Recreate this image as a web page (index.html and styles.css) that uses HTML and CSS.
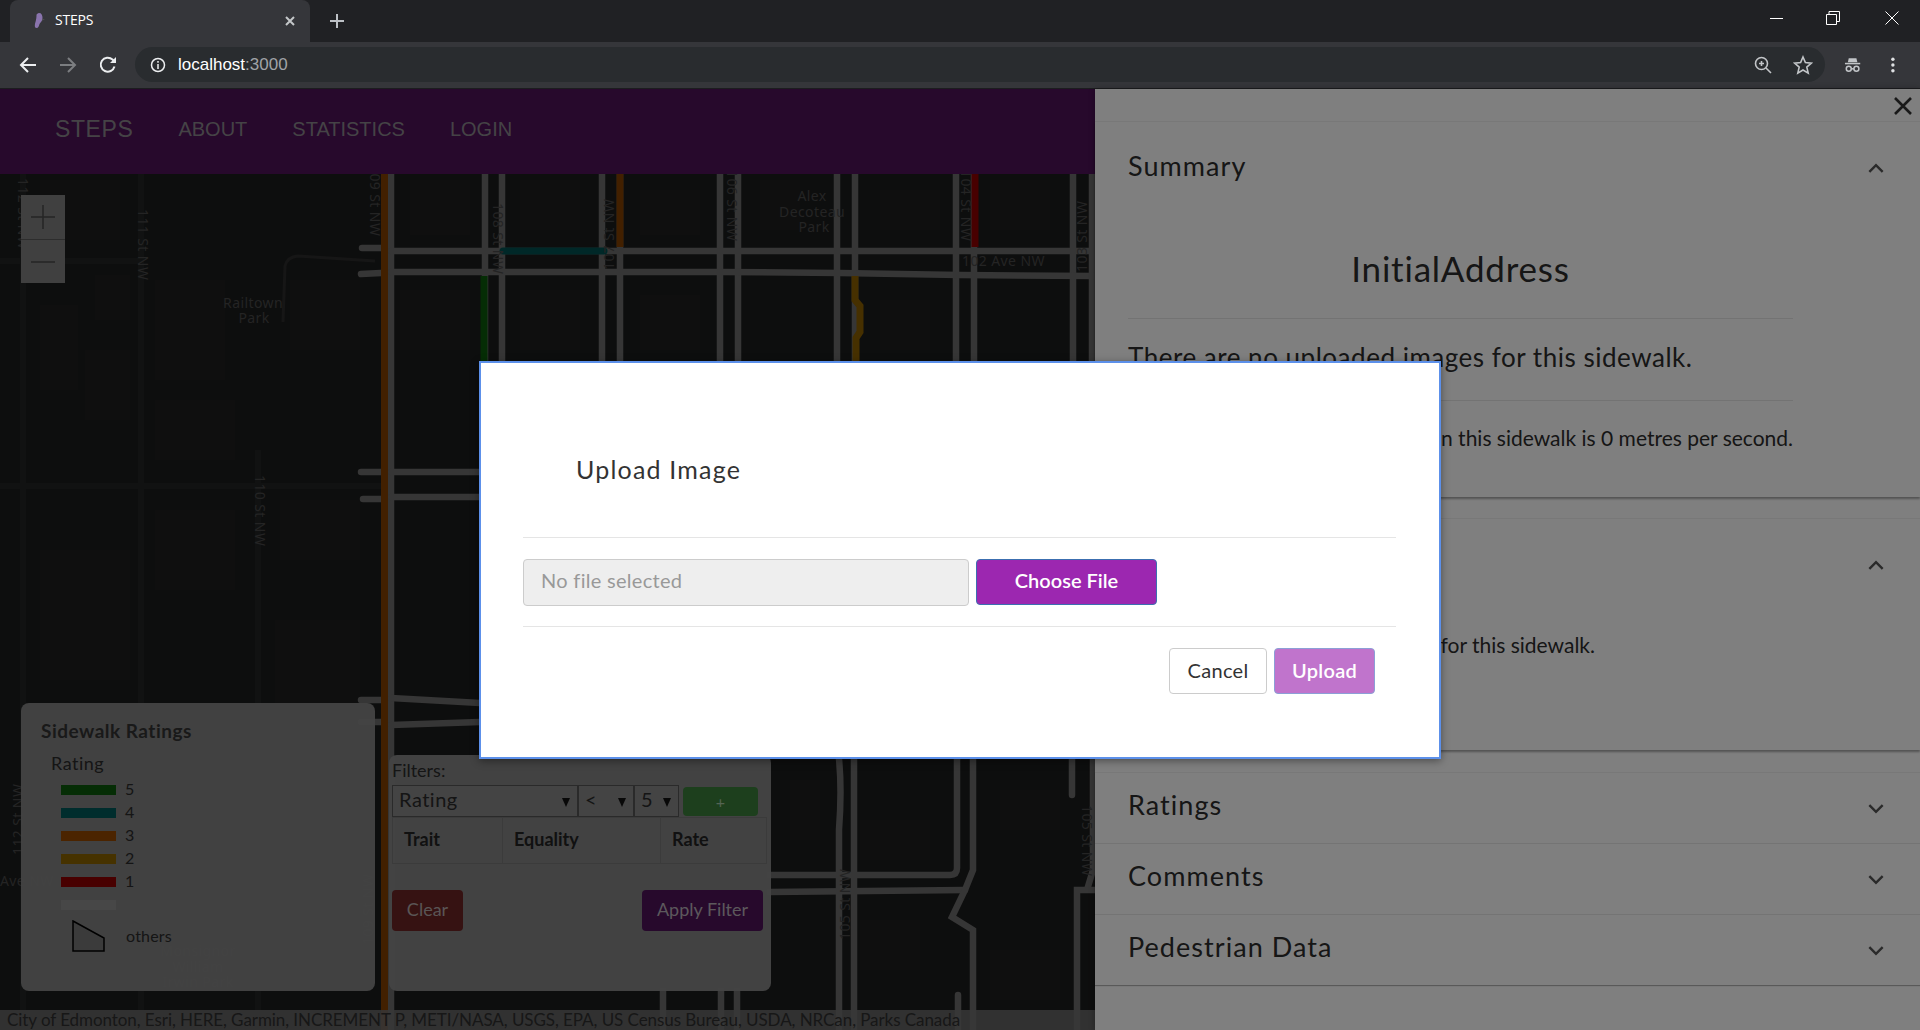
FILE: index.html
```html
<!DOCTYPE html>
<html lang="en">
<head>
<meta charset="utf-8">
<title>STEPS</title>
<link rel="stylesheet" href="styles.css">
</head>
<body>
<div class="tabstrip">
  <div class="tab">
    <svg class="favicon" width="12" height="16" viewBox="0 0 12 16"><path class="favicon-foot" d="M6 0c2.500 0 3.500 2 3.500 5 0 3-2 4-3 6-.6 2-1 4-3 4C1.500 15 1.500 12 2.500 9c.8-3 1-5 1-7 0-1 1.500-2 2.500-2z"/><path class="favicon-toe" d="M9 6l3 .5-3 1z"/></svg>
    <span class="tab-title">STEPS</span>
    <svg class="tab-close" width="10" height="10" viewBox="0 0 10 10"><path d="M1 1l8 8M9 1l-8 8"/></svg>
  </div>
  <svg class="newtab" width="16" height="16" viewBox="0 0 16 16"><path d="M8 1v14M1 8h14"/></svg>
  <div class="window-controls">
    <svg width="14" height="14" viewBox="0 0 14 14"><path d="M0 7.500h13"/></svg>
    <svg width="14" height="14" viewBox="0 0 14 14"><path d="M.5 3.500h10v10H.5zM3 3.500V.5h10.500v10h-3"/></svg>
    <svg width="14" height="14" viewBox="0 0 14 14"><path d="M.5.5l13 13M13.500.5l-13 13"/></svg>
  </div>
</div>
<div class="toolbar">
  <svg class="nav-icon" width="18" height="18" viewBox="0 0 18 18"><path class="ink-light" d="M17 9H2M9 2L2 9l7 7"/></svg>
  <svg class="nav-icon" width="18" height="18" viewBox="0 0 18 18"><path class="ink-dim" d="M1 9h15M9 2l7 7-7 7"/></svg>
  <svg class="nav-icon" width="18" height="18" viewBox="0 0 18 18"><path class="ink-light" d="M15.500 10.500A7 7 0 1 1 13.500 3.500L16 6"/><path class="ink-fill" d="M17 1v6h-6z"/></svg>
  <div class="omnibox">
    <svg class="info" width="16" height="16" viewBox="0 0 16 16"><circle class="ink-light" cx="8" cy="8" r="6.500"/><path class="ink-light" d="M8 7v5M8 4v1.800"/></svg>
    <span class="host">localhost</span><span class="port">:3000</span>
    <span class="omni-spacer"></span>
    <svg class="omni-icon omni-zoom" width="18" height="18" viewBox="0 0 18 18"><circle class="ink-grey" cx="7.500" cy="7.500" r="6"/><path class="ink-grey" d="M12 12l5 5M7.500 5v5M5 7.500h5"/></svg>
    <svg class="omni-icon" width="20" height="20" viewBox="0 0 20 20"><path class="ink-grey" d="M10 2l2.400 5.600 6 .5-4.600 4 1.400 6L10 15l-5.200 3.100 1.400-6-4.600-4 6-.5z"/></svg>
  </div>
  <svg class="incognito" width="18" height="16" viewBox="0 0 18 16"><path class="ink-fill-grey" d="M5 1h8l1 4H4z"/><path class="ink-grey" d="M1 6.500h16"/><circle class="ink-grey" cx="5" cy="12" r="2.600"/><circle class="ink-grey" cx="13" cy="12" r="2.600"/><path class="ink-grey" d="M7.600 12h2.800"/></svg>
  <svg class="dots" width="4" height="16" viewBox="0 0 4 16"><circle cx="2" cy="2" r="1.800"/><circle cx="2" cy="8" r="1.800"/><circle cx="2" cy="14" r="1.800"/></svg>
</div>

<div class="page">
  <main class="main">
    <nav class="navbar">
      <a class="brand">STEPS</a>
      <a class="nav-link">ABOUT</a>
      <a class="nav-link">STATISTICS</a>
      <a class="nav-link">LOGIN</a>
    </nav>
    <div class="map">
      <svg class="map-canvas" viewBox="0 174 1095 856" width="1095" height="856">
        <g class="blocks">
          <rect x="40" y="180" width="80" height="60"/><rect x="95" y="275" width="35" height="45"/><rect x="155" y="280" width="70" height="100"/><rect x="40" y="305" width="38" height="85"/><rect x="85" y="350" width="45" height="70"/><rect x="155" y="400" width="80" height="60"/><rect x="290" y="280" width="70" height="70"/><rect x="155" y="510" width="80" height="80"/><rect x="40" y="550" width="90" height="130"/><rect x="280" y="500" width="80" height="60"/><rect x="275" y="620" width="85" height="90"/><rect x="400" y="290" width="70" height="60"/><rect x="410" y="180" width="60" height="55"/><rect x="520" y="180" width="60" height="50"/><rect x="640" y="190" width="60" height="45"/><rect x="760" y="180" width="40" height="50"/><rect x="880" y="190" width="60" height="40"/><rect x="990" y="180" width="60" height="50"/><rect x="520" y="290" width="60" height="60"/><rect x="640" y="295" width="60" height="55"/><rect x="880" y="300" width="50" height="50"/><rect x="860" y="820" width="70" height="40"/><rect x="860" y="920" width="60" height="50"/><rect x="1000" y="790" width="60" height="40"/><rect x="990" y="950" width="70" height="50"/><rect x="790" y="780" width="30" height="60"/>
        </g>
        <g class="minor">
          <path d="M23 174V1010M141 174V1010M258 450V1010M0 486H381M0 261H141"/>
        </g>
        <path class="path-faint" d="M283 322L285 266Q287 257 298 256L375 261"/>
        <g class="walks">
          <path d="M391 174V1030M485 174V361M502 174V361M602 174V361M620 174V361M720 174V361M738 174V361M837 174V361M855 174V361M956 174V361M974 174V361M1073 174V361M1092 174V361"/>
          <path d="M391 251H1095M391 272L720 272L840 273L960 275L1095 276"/>
          <path d="M362 248H381M361 274L381 273M361 472H381M363 499H381M361 700H381M361 722H381"/>
          <path d="M391 472H480M391 497H480M391 698L480 703M391 725L480 722"/>
          <path d="M770 875H950Q957 875 957 868V759M770 892L965 890"/>
          <path d="M973 759V870L965 890L952 917L973 930V1030M839 759Q842 790 839 830V1030M854 759V1030M1072 759V795M1093 759V870L1087 890H1077V1030M1077 890H1095M958 995V1030M663 991V1030M721 991V1030M737 991V1030"/>
        </g>
        <path class="seg seg-3" d="M384.500 174V1030"/>
        <path class="seg seg-3" d="M620 174V247"/>
        <path class="seg seg-1" d="M975 174V247"/>
        <path class="seg seg-5" d="M484 276V361"/>
        <path class="seg seg-2" d="M855 276V300L860 306V332L856 338V361"/>
        <path class="seg seg-4 round" d="M503 251H604"/>
        <g class="map-label">
          <text transform="translate(18 178) rotate(90)">112 St NW</text>
          <text transform="translate(138 209) rotate(90)">111 St NW</text>
          <text transform="translate(255 475) rotate(90)">110 St NW</text>
          <text transform="translate(370 165) rotate(90)">109 St NW</text>
          <text transform="translate(493 203) rotate(90)">108 St NW</text>
          <text transform="translate(614 270) rotate(-90)">107 St NW</text>
          <text transform="translate(727 170) rotate(90)">106 St NW</text>
          <text transform="translate(961 170) rotate(90)">104 St NW</text>
          <text transform="translate(1087 272) rotate(-90)">103 St NW</text>
          <text transform="translate(850 940) rotate(-90)">105 St NW</text>
          <text transform="translate(1082 805) rotate(90)">105 St NW</text>
          <text transform="translate(23 855) rotate(-90)">112 St NW</text>
          <text transform="translate(373 945) rotate(-90)">109 St NW</text>
          <text x="962" y="266">102 Ave NW</text>
          <text x="0" y="886">Ave NW</text>
          <text class="center" x="253" y="308">Railtown</text>
          <text class="center" x="254" y="323">Park</text>
          <text class="center" x="812" y="201">Alex</text>
          <text class="center" x="812" y="217">Decoteau</text>
          <text class="center" x="814" y="232">Park</text>
          <text class="center" x="198" y="956">Monsignor</text>
          <text class="center" x="198" y="972">William</text>
          <text class="center" x="198" y="987">Irwin Park</text>
        </g>
      </svg>
      <div class="zoom-control">
        <div class="zoom-button"><svg width="26" height="26" viewBox="0 0 26 26"><path d="M13 1v24M1 13h24"/></svg></div>
        <div class="zoom-button"><svg width="26" height="26" viewBox="0 0 26 26"><path d="M1 13h24"/></svg></div>
      </div>
      <aside class="legend">
        <h3 class="legend-title">Sidewalk Ratings</h3>
        <div class="legend-sub">Rating</div>
        <ul class="legend-list">
          <li class="legend-row"><span class="swatch swatch-5"></span><span class="legend-num">5</span></li>
          <li class="legend-row"><span class="swatch swatch-4"></span><span class="legend-num">4</span></li>
          <li class="legend-row"><span class="swatch swatch-3"></span><span class="legend-num">3</span></li>
          <li class="legend-row"><span class="swatch swatch-2"></span><span class="legend-num">2</span></li>
          <li class="legend-row"><span class="swatch swatch-1"></span><span class="legend-num">1</span></li>
          <li class="legend-row"><span class="swatch swatch-0"></span></li>
        </ul>
        <div class="legend-others">
          <svg width="33" height="32" viewBox="0 0 33 32"><path d="M1 1L32 18V31H1z"/></svg>
          <span class="legend-others-label">others</span>
        </div>
      </aside>
      <aside class="filters">
        <div class="filters-title">Filters:</div>
        <div class="filter-row">
          <div class="select select-trait">Rating</div>
          <div class="select select-op">&lt;</div>
          <div class="select select-val">5</div>
          <button class="btn-add">+</button>
        </div>
        <table class="filter-table">
          <thead><tr><th class="col-trait">Trait</th><th class="col-eq">Equality</th><th class="col-rate">Rate</th></tr></thead>
        </table>
        <div class="filter-actions">
          <button class="btn-filter btn-clear">Clear</button>
          <button class="btn-filter btn-apply">Apply Filter</button>
        </div>
      </aside>
      <div class="attribution">City of Edmonton, Esri, HERE, Garmin, INCREMENT P, METI/NASA, USGS, EPA, US Census Bureau, USDA, NRCan, Parks Canada</div>
    </div>
  </main>

  <section class="panel">
    <svg class="panel-close" width="18" height="18" viewBox="0 0 18 18"><path d="M1 1l16 16M17 1L1 17"/></svg>
    <article class="card card-summary">
      <header class="card-head"><h2>Summary</h2><svg class="chev" viewBox="0 0 14 9"><path d="M1 8l6-6 6 6"/></svg></header>
      <div class="card-body">
        <div class="summary-title">InitialAddress</div>
        <p class="summary-images">There are no uploaded images for this sidewalk.</p>
        <p class="summary-speed">The average speed on this sidewalk is 0 metres per second.</p>
      </div>
    </article>
    <article class="card card-images">
      <header class="card-head"><h2>Images</h2><svg class="chev" viewBox="0 0 14 9"><path d="M1 8l6-6 6 6"/></svg></header>
      <p class="images-note">There are no images for this sidewalk.</p>
    </article>
    <article class="card card-closed">
      <header class="card-head"><h2>Ratings</h2><svg class="chev" viewBox="0 0 14 9"><path d="M1 1l6 6 6-6"/></svg></header>
    </article>
    <article class="card card-closed card-flush">
      <header class="card-head"><h2>Comments</h2><svg class="chev" viewBox="0 0 14 9"><path d="M1 1l6 6 6-6"/></svg></header>
    </article>
    <article class="card card-closed card-flush">
      <header class="card-head"><h2>Pedestrian Data</h2><svg class="chev" viewBox="0 0 14 9"><path d="M1 1l6 6 6-6"/></svg></header>
    </article>
  </section>

  <div class="backdrop">
    <div class="modal">
      <div class="modal-head"><h1>Upload Image</h1></div>
      <div class="modal-file">
        <div class="file-field">No file selected</div>
        <button class="btn-choose">Choose File</button>
      </div>
      <div class="modal-actions">
        <button class="btn-cancel">Cancel</button>
        <button class="btn-upload">Upload</button>
      </div>
    </div>
  </div>
</div>
</body>
</html>
```
FILE: styles.css
```css
* { box-sizing: border-box; }
html, body { margin: 0; padding: 0; }
body {
  width: 1920px;
  height: 1030px;
  overflow: hidden;
  display: flex;
  flex-direction: column;
  font-family: "Lato", "Open Sans", sans-serif;
  background: #fff;
}

/* browser chrome */
.tabstrip {
  height: 42px;
  flex: none;
  background: #202124;
  display: flex;
  align-items: center;
  padding-left: 10px;
}
.tab {
  width: 300px;
  height: 42px;
  background: #35363a;
  border-radius: 8px 8px 0 0;
  display: flex;
  align-items: center;
  padding: 0 15px 0 23px;
}
.favicon { margin-right: 10px; }
.favicon-foot { fill: #8a74ad; }
.favicon-toe { fill: #555; }
.tab-title {
  flex: 1;
  color: #fff;
  font: 14px/18px "Open Sans", sans-serif;
  letter-spacing: -.2px;
  padding-bottom: 2px;
}
.tab-close path { stroke: #c4c7c9; stroke-width: 2; fill: none; }
.newtab { margin-left: 19px; }
.newtab path { stroke: #bdc1c6; stroke-width: 2; fill: none; }
.window-controls {
  margin-left: auto;
  display: flex;
  gap: 42px;
  padding-right: 21px;
  margin-top: -6px;
}
.window-controls svg:last-child { margin-left: 3px; }
.window-controls path { stroke: #fff; stroke-width: 1; fill: none; }

.toolbar {
  height: 47px;
  flex: none;
  background: #35363a;
  border-bottom: 1px solid #1c1d1f;
  display: flex;
  align-items: center;
  padding: 0 25px 1px 19px;
}
.nav-icon { margin-right: 22px; flex: none; }
.nav-icon:nth-child(3) { margin-right: 18px; }
.nav-icon path { fill: none; stroke-width: 2; }
.ink-light { stroke: #eceef0; stroke-width: 2; fill: none; }
.ink-dim { stroke: #7c7e81; }
.nav-icon .ink-fill { fill: #eceef0; stroke: none; }
.ink-grey { stroke: #c2c5c8; stroke-width: 1.600; fill: none; }
.ink-fill-grey { fill: #c2c5c8; }
.omnibox {
  flex: none;
  width: 1690px;
  height: 35px;
  background: #292c2f;
  border-radius: 18px;
  display: flex;
  align-items: center;
  padding: 0 12px 0 15px;
  font: 17px/20px "Liberation Sans", sans-serif;
}
.host, .port { padding-top: 1px; }
.info { margin-right: 12px; }
.info .ink-light { stroke-width: 1.500; }
.host { color: #fff; }
.port { color: #a0a3a7; }
.omni-spacer { flex: 1; }
.omni-icon { margin-left: 20px; }
.omni-zoom { margin-right: 1px; }
.incognito { margin-left: 19px; }
.dots { margin-left: 30px; fill: #dfe1e3; }

/* page */
.page {
  flex: 1;
  position: relative;
  display: flex;
  min-height: 0;
}
.main {
  width: 1095px;
  flex: none;
  display: flex;
  flex-direction: column;
}
.navbar {
  height: 85px;
  flex: none;
  background: #4e1258;
  display: flex;
  align-items: center;
  padding-left: 55px;
  font-family: "Liberation Sans", sans-serif;
  color: #8a868c;
  padding-bottom: 4px;
}
.brand { font-size: 23px; margin-right: 45px; letter-spacing: .6px; }
.nav-link { font-size: 20px; margin-right: 45px; }

.map {
  flex: 1;
  position: relative;
  overflow: hidden;
  background: #1b1c1c;
}
.map-canvas { display: block; }
.blocks rect { fill: #1e1f1f; }
.minor path { stroke: #222525; stroke-width: 6; fill: none; }
.path-faint { stroke: #2c2c2c; stroke-width: 3; fill: none; }
.walks path { stroke: #6c6c6c; stroke-width: 6.500; fill: none; stroke-linecap: round; }
.seg { fill: none; stroke-width: 7; }
.seg.round { stroke-linecap: round; }
.seg-5 { stroke: #0a5a0a; }
.seg-4 { stroke: #005050; }
.seg-3 { stroke: #844000; }
.seg-2 { stroke: #8c6000; }
.seg-1 { stroke: #900000; }
.map-label text {
  font: 14px "Noto Sans", "Open Sans", sans-serif;
  fill: #484848;
  letter-spacing: .4px;
}
.map-label .center { text-anchor: middle; }

.zoom-control {
  position: absolute;
  left: 21px;
  top: 21px;
  width: 44px;
  background: #808080;
}
.zoom-button {
  height: 44px;
  display: flex;
  align-items: center;
  justify-content: center;
}
.zoom-button + .zoom-button { border-top: 1px solid #5a5a5a; }
.zoom-button path { stroke: #4a4a4a; stroke-width: 1.500; fill: none; }

.legend {
  position: absolute;
  left: 21px;
  bottom: 39px;
  width: 354px;
  height: 288px;
  background: rgba(136, 136, 136, .95);
  border-radius: 8px;
  padding: 17px 20px;
  color: #2a2a2a;
}
.legend-title {
  margin: 0;
  font-size: 19px;
  line-height: 22px;
  font-weight: 700;
  letter-spacing: .5px;
  color: #333;
}
.legend-sub {
  margin: 10px 0 0 10px;
  font-size: 18px;
  line-height: 22px;
  letter-spacing: .5px;
}
.legend-list { list-style: none; margin: 4px 0 0 20px; padding: 0; }
.legend-row {
  height: 23px;
  display: flex;
  align-items: center;
  font-size: 16px;
  gap: 9px;
}
.legend-num { padding-bottom: 3px; }
.swatch { width: 55px; height: 10px; flex: none; }
.swatch-5 { background: #0a5a0a; }
.swatch-4 { background: #005a5a; }
.swatch-3 { background: #964800; }
.swatch-2 { background: #8c6400; }
.swatch-1 { background: #900000; }
.swatch-0 { background: #8f8f8f; }
.legend-others {
  display: flex;
  align-items: center;
  margin: 4px 0 0 31px;
  gap: 21px;
  font-size: 16px;
}
.legend-others svg { display: block; flex: none; }
.legend-others path { fill: #777; stroke: #000; stroke-width: 1.500; }
.legend-others-label { letter-spacing: .2px; padding-bottom: 2px; }

.filters {
  position: absolute;
  left: 389px;
  bottom: 39px;
  width: 382px;
  height: 236px;
  background: rgba(136, 136, 136, .98);
  border-radius: 8px;
  padding: 4px 3px 0;
  color: #2a2a2a;
}
.filters-title { font-size: 18px; line-height: 22px; height: 26px; }
.filter-row { display: flex; align-items: stretch; height: 32px; }
.select {
  border: 1px solid #555;
  font-size: 20px;
  letter-spacing: .5px;
  padding: 0 0 4px 6px;
  display: flex;
  align-items: center;
  position: relative;
  background: #888;
}
.select::after {
  content: "";
  position: absolute;
  right: 7px;
  top: 12px;
  border-left: 4px solid transparent;
  border-right: 4px solid transparent;
  border-top: 9px solid #111;
}
.select-trait { width: 186px; }
.select-op { width: 56px; }
.select-val { width: 45px; }
.btn-add {
  width: 75px;
  height: 29px;
  margin: 2px 0 0 4px;
  background: #3a7f3a;
  border: 0;
  border-radius: 4px;
  color: #a8c8a8;
  font: 16px "Lato", sans-serif;
}
.filter-table {
  width: 375px;
  height: 47px;
  border-collapse: collapse;
  border: 1px solid #777;
  table-layout: fixed;
  font-size: 18px;
  color: #222;
}
.filter-table th {
  border: 1px solid #777;
  text-align: left;
  padding: 0 0 4px 11px;
  font-weight: 700;
}
.col-trait { width: 110px; }
.col-eq { width: 158px; }
.filter-actions {
  display: flex;
  justify-content: space-between;
  margin-top: 26px;
  padding-right: 5px;
}
.btn-filter {
  height: 41px;
  border: 0;
  border-radius: 4px;
  padding: 0 0 3px;
  font: 18px "Lato", sans-serif;
}
.btn-clear { width: 71px; background: #6c2424; color: #b4aaaa; }
.btn-apply { width: 121px; background: #4e1258; color: #b8b0b8; }

.attribution {
  position: absolute;
  left: 0;
  right: 0;
  bottom: 0;
  height: 20px;
  background: rgba(110, 110, 110, .85);
  color: #2e2e2e;
  font: 17px/20px "Lato", sans-serif;
  letter-spacing: -.065px;
  padding-left: 7px;
  white-space: nowrap;
  overflow: hidden;
}

/* side panel */
.panel {
  flex: 1;
  position: relative;
  background: #fff;
  padding-top: 32px;
  color: #2c2c2c;
  box-shadow: 0 0 6px rgba(0,0,0,.3);
}
.panel-close {
  position: absolute;
  right: 8px;
  top: 8px;
}
.panel-close path { stroke: #333; stroke-width: 2.600; fill: none; }
.card {
  background: #fff;
  border-top: 1px solid #f0f0f0;
  box-shadow: 0 2px 2px rgba(0,0,0,.35);
  margin-bottom: 21px;
}
.card-head {
  display: flex;
  align-items: center;
  justify-content: space-between;
  padding: 0 36px 0 33px;
  height: 92px;
}
.card-head h2 {
  margin: 0;
  font-size: 27px;
  font-weight: 400;
  letter-spacing: 1.050px;
  padding-bottom: 6px;
}
.chev { width: 16px; height: 10px; display: block; }
.chev path { stroke: #555; stroke-width: 2.200; fill: none; }
.card-summary { height: 376px; }
.card-images { height: 232px; margin-bottom: 22px; }
.card-body { width: 665px; margin-left: 33px; }
.summary-title {
  height: 105px;
  border-bottom: 1px solid #e6e6e6;
  text-align: center;
  font-size: 35px;
  line-height: 41px;
  letter-spacing: .8px;
  padding-top: 34px;
}
.summary-images {
  margin: 0;
  height: 82px;
  border-bottom: 1px solid #e6e6e6;
  font-size: 26px;
  line-height: 32px;
  letter-spacing: .52px;
  padding-top: 22px;
}
.summary-speed {
  margin: 0;
  text-align: right;
  font-size: 21px;
  line-height: 28px;
  padding-top: 23px;
}
.images-note {
  margin: 0;
  text-align: right;
  width: 500px;
  padding-top: 20px;
  font-size: 21px;
  line-height: 28px;
}
.card-closed { height: 71px; margin-bottom: 0; box-shadow: 0 1px 1px rgba(0,0,0,.3); }
.card-closed .card-head { height: 68px; }
.card-closed .chev { margin-top: 4px; }
.card-flush { border-top: 1px solid #e8e8e8; }

/* modal */
.backdrop {
  position: absolute;
  inset: 0;
  background: rgba(0, 0, 0, .5);
  display: flex;
  align-items: center;
  justify-content: center;
}
.modal {
  width: 962px;
  height: 398px;
  background: #fff;
  border: 2px solid #5c90ea;
  box-shadow: 0 2px 8px rgba(0,0,0,.4);
  padding: 0 43px 0 42px;
  color: #333;
}
.modal-head {
  height: 175px;
  border-bottom: 1px solid #e5e5e5;
  padding: 88px 0 0 53px;
}
.modal-head h1 {
  margin: 0;
  font-size: 25px;
  line-height: 36px;
  font-weight: 400;
  letter-spacing: 1.200px;
}
.modal-file {
  height: 89px;
  border-bottom: 1px solid #e5e5e5;
  padding-top: 21px;
  display: flex;
  gap: 7px;
}
.file-field {
  width: 446px;
  height: 47px;
  background: #eee;
  border: 1px solid #ccc;
  border-radius: 4px;
  color: #999;
  font-size: 20px;
  line-height: 41px;
  padding-left: 17px;
  letter-spacing: .3px;
}
.btn-choose {
  width: 181px;
  height: 46px;
  padding: 0 0 3px;
  background: #9c27b0;
  border: 1px solid #3c6fb0;
  border-radius: 4px;
  color: #fff;
  font: 600 20px "Lato", sans-serif;
}
.modal-actions {
  display: flex;
  justify-content: flex-end;
  gap: 7px;
  padding: 21px 21px 0 0;
}
.btn-cancel, .btn-upload {
  height: 46px;
  padding: 0 0 2px;
  border-radius: 4px;
  font: 20px "Lato", sans-serif;
  letter-spacing: .3px;
}
.btn-cancel {
  width: 98px;
  background: #fff;
  border: 1px solid #ccc;
  color: #333;
}
.btn-upload {
  width: 101px;
  background: #c074cc;
  border: 1px solid #8c9fd6;
  color: #fff;
  font-weight: 600;
}
```
